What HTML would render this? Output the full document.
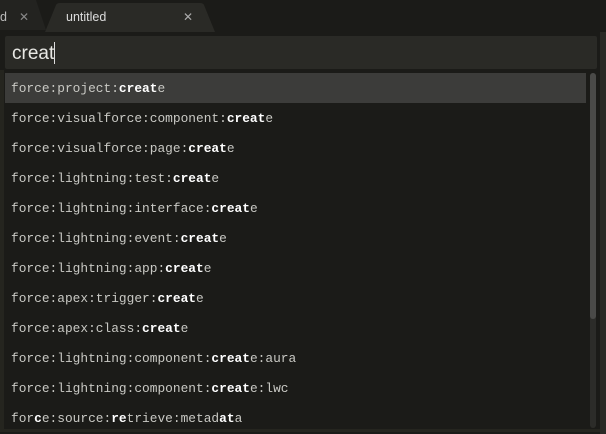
<!DOCTYPE html>
<html><head><style>
*{margin:0;padding:0;box-sizing:border-box}
body{width:606px;height:434px;background:#1b1b18;overflow:hidden;position:relative;font-family:"Liberation Sans",sans-serif}
.tabs{position:absolute;left:0;top:0;width:606px;height:32px;background:#1b1b18}
.input{position:absolute;left:5px;top:36px;width:592px;height:33px;background:#2a2a26;border-radius:2px;color:#e8e8e4;font-size:19px;padding:6px 0 0 7px}
.cur{display:inline-block;width:1px;height:22px;background:#ddd;vertical-align:-5px}
.list{position:absolute;left:0;top:70px;width:600px;height:362px;background:#1b1b18;border-left:4px solid #25251f;border-bottom:3px solid #25251f}
.row{position:absolute;left:5px;width:581px;height:30px;font-family:"Liberation Mono",monospace;font-size:12.85px;color:#c9c9c4;padding:8px 0 0 6px;white-space:pre}
.row b{color:#fff;font-weight:bold}
.sel{background:#3c3c3a}
.rb{position:absolute;left:600px;top:32px;width:6px;height:402px;background:#2a2a26}
.track{position:absolute;left:590px;top:73px;width:6px;height:355px;background:#2c2c29;border-radius:3px}
.thumb{position:absolute;left:590px;top:73px;width:6px;height:246px;background:#4a4a48;border-radius:3px}
</style></head><body>
<div class="tabs">
<svg width="606" height="32" style="position:absolute;left:0;top:0">
<path d="M0 0 H36 L46 30 H0Z" fill="#232320"/>
<path d="M45 32 L56 5 Q57 3 60 3 H200 Q203 3 204 5 L215 32Z" fill="#2a2a26"/>
<text x="0" y="21" fill="#bbb" font-size="12.5" font-family="Liberation Sans">d</text>
<text x="19" y="21" fill="#888" font-size="12" font-family="Liberation Sans">✕</text>
<text x="66" y="21" fill="#ddd" font-size="12.5" font-family="Liberation Sans">untitled</text>
<text x="183" y="21" fill="#aaa" font-size="12" font-family="Liberation Sans">✕</text>
</svg>
</div>
<div class="rb"></div>
<div class="input">creat<span class="cur"></span></div>
<div class="list"></div>
<div class="row sel" style="top:73px">force:project:<b>creat</b>e</div>
<div class="row" style="top:103px">force:visualforce:component:<b>creat</b>e</div>
<div class="row" style="top:133px">force:visualforce:page:<b>creat</b>e</div>
<div class="row" style="top:163px">force:lightning:test:<b>creat</b>e</div>
<div class="row" style="top:193px">force:lightning:interface:<b>creat</b>e</div>
<div class="row" style="top:223px">force:lightning:event:<b>creat</b>e</div>
<div class="row" style="top:253px">force:lightning:app:<b>creat</b>e</div>
<div class="row" style="top:283px">force:apex:trigger:<b>creat</b>e</div>
<div class="row" style="top:313px">force:apex:class:<b>creat</b>e</div>
<div class="row" style="top:343px">force:lightning:component:<b>creat</b>e:aura</div>
<div class="row" style="top:373px">force:lightning:component:<b>creat</b>e:lwc</div>
<div class="row" style="top:403px">for<b>c</b>e:source:<b>re</b>trieve:metad<b>at</b>a</div>
<div class="track"></div>
<div class="thumb"></div>
</body></html>
